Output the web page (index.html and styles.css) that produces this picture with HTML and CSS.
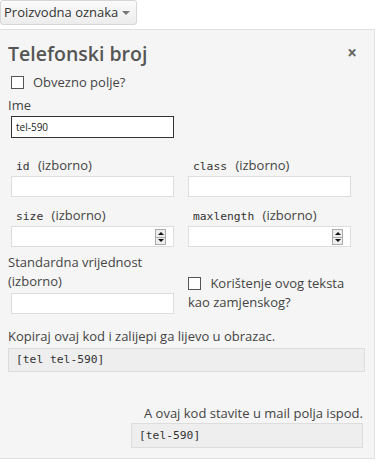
FILE: index.html
```html
<!DOCTYPE html>
<html lang="hr">
<head>
    <meta charset="UTF-8">
    <title>Telefonski broj</title>
    <link rel="stylesheet" href="styles.css">
</head>
<body>

    <button class="tag-btn" type="button">Proizvodna oznaka <span class="caret"></span></button>

    <div class="panel">
        <div class="panel-head">
            <h2>Telefonski broj</h2>
            <span class="close">&times;</span>
        </div>

        <label class="check-row"><span class="box"></span> Obvezno polje?</label>

        <div class="name-field">
            <label for="tag-name">Ime</label>
            <input type="text" id="tag-name" class="name-input" value="tel-590">
        </div>

        <div class="grid">
            <div class="field">
                <label><code>id</code> (izborno)</label>
                <input type="text" class="opt-input">
            </div>
            <div class="field">
                <label><code>class</code> (izborno)</label>
                <input type="text" class="opt-input">
            </div>
            <div class="field">
                <label><code>size</code> (izborno)</label>
                <div class="spin-wrap">
                    <input type="text" class="opt-input">
                    <span class="spin"><i class="up"></i><i class="down"></i></span>
                </div>
            </div>
            <div class="field">
                <label><code>maxlength</code> (izborno)</label>
                <div class="spin-wrap">
                    <input type="text" class="opt-input">
                    <span class="spin"><i class="up"></i><i class="down"></i></span>
                </div>
            </div>
            <div class="field">
                <label class="plain">Standardna vrijednost (izborno)</label>
                <input type="text" class="opt-input">
            </div>
            <div class="field placeholder-field">
                <label class="check-row wrap"><span class="box"></span> Korištenje ovog teksta kao zamjenskog?</label>
            </div>
        </div>

        <p class="hint">Kopiraj ovaj kod i zalijepi ga lijevo u obrazac.</p>
        <div class="code full">[tel tel-590]</div>

        <p class="hint right">A ovaj kod stavite u mail polja ispod.</p>
        <div class="code mail">[tel-590]</div>
    </div>

</body>
</html>
```

FILE: styles.css
```css
body {
    margin: 0;
    font-family: "Open Sans", Arial, sans-serif;
    font-size: 13px;
    color: #444;
    background: #fff;
}
.tag-btn {
    display: flex;
    align-items: center;
    width: 137px;
    height: 25px;
    padding: 0 0 1px 3px;
    font-family: "Open Sans", Arial, sans-serif;
    font-size: 13px;
    color: #333;
    background: linear-gradient(#fbfbfb, #ececec);
    border: 1px solid #d6d6d6;
    border-radius: 3px;
}
.caret {
    margin: 2px 0 0 4px;
    border: 4px solid transparent;
    border-top: 4px solid #777;
    border-bottom: none;
}
.panel {
    margin-top: 4px;
    width: 375px;
    height: 430px;
    background: #f5f5f5;
    border: 1px solid #e0e0e0;
    border-left: none;
    padding: 0 0 0 8px;
    box-sizing: border-box;
}
.panel-head {
    display: flex;
    justify-content: space-between;
    align-items: center;
    height: 42px;
}
.panel-head h2 {
    margin: 4px 0 0;
    font-size: 19.5px;
    font-weight: 600;
    color: #555;
}
.close {
    font-size: 17px;
    font-weight: bold;
    color: #666;
    margin: 2px 17px 0 0;
}
.check-row {
    display: flex;
    align-items: center;
    gap: 9px;
    height: 20px;
    margin: 0 0 0 3px;
}
.box {
    width: 11px;
    height: 11px;
    border: 1px solid #555;
    background: #fff;
    flex-shrink: 0;
}
.name-field label {
    display: block;
    margin-top: 4px;
    line-height: 18px;
}
.name-input {
    display: block;
    margin: 2px 0 0 3px;
    width: 163px;
    height: 22px;
    box-sizing: border-box;
    border: 1px solid #333;
    font-family: "Open Sans", Arial, sans-serif;
    font-size: 10px;
    padding: 0 4px;
    color: #222;
}
.grid {
    display: grid;
    grid-template-columns: 163px 163px;
    column-gap: 14px;
    margin: 0 0 0 3px;
}
.field label {
    display: block;
    height: 18px;
    line-height: 18px;
    padding-left: 5px;
    margin-top: 18px;
}
.field:nth-child(3) label,
.field:nth-child(4) label {
    margin-top: 9px;
}
.field label.plain {
    height: auto;
    padding-left: 0;
    margin-left: -3px;
    margin-top: 6px;
    line-height: 19px;
}
code {
    font-family: "DejaVu Sans Mono", "Liberation Mono", monospace;
    font-size: 11.3px;
    line-height: 1;
    margin-right: 5px;
    color: #333;
}
.opt-input {
    display: block;
    width: 163px;
    height: 21px;
    box-sizing: border-box;
    border: 1px solid #ddd;
    background: #fff;
    margin-top: 2px;
}
.spin-wrap {
    position: relative;
}
.spin {
    position: absolute;
    right: 8px;
    top: 3px;
    width: 11px;
    height: 16px;
    border: 1px solid #aaa;
    background: #eee;
    box-sizing: border-box;
    display: flex;
    flex-direction: column;
}
.spin i {
    flex: 1;
    display: flex;
    align-items: center;
    justify-content: center;
}
.spin .up {
    border-bottom: 1px solid #aaa;
}
.spin .up::after {
    content: "";
    border: 3px solid transparent;
    border-bottom: 3px solid #111;
    border-top: none;
}
.spin .down::after {
    content: "";
    border: 3px solid transparent;
    border-top: 3px solid #111;
    border-bottom: none;
}
.placeholder-field {
    display: flex;
    align-items: flex-end;
}
.check-row.wrap {
    display: block;
    padding-left: 0;
    margin: 0 0 2px;
    line-height: 19px;
    height: auto;
}
.check-row.wrap .box {
    display: inline-block;
    vertical-align: -2px;
    margin-right: 6px;
}
.hint {
    margin: 12px 0 0;
    line-height: 20px;
}
.hint.right {
    text-align: right;
    margin: 31px 11px 0 0;
}
.code {
    font-family: "DejaVu Sans Mono", "Liberation Mono", monospace;
    font-size: 11.3px;
    color: #333;
    background: #eee;
    border: 1px solid #ddd;
    height: 24px;
    line-height: 22px;
    box-sizing: border-box;
    padding-left: 7px;
    margin-top: 2px;
}
.code.full {
    width: 357px;
}
.code.mail {
    width: 232px;
    height: 25px;
    line-height: 23px;
    margin-top: 0;
    margin-left: 123px;
}
```
